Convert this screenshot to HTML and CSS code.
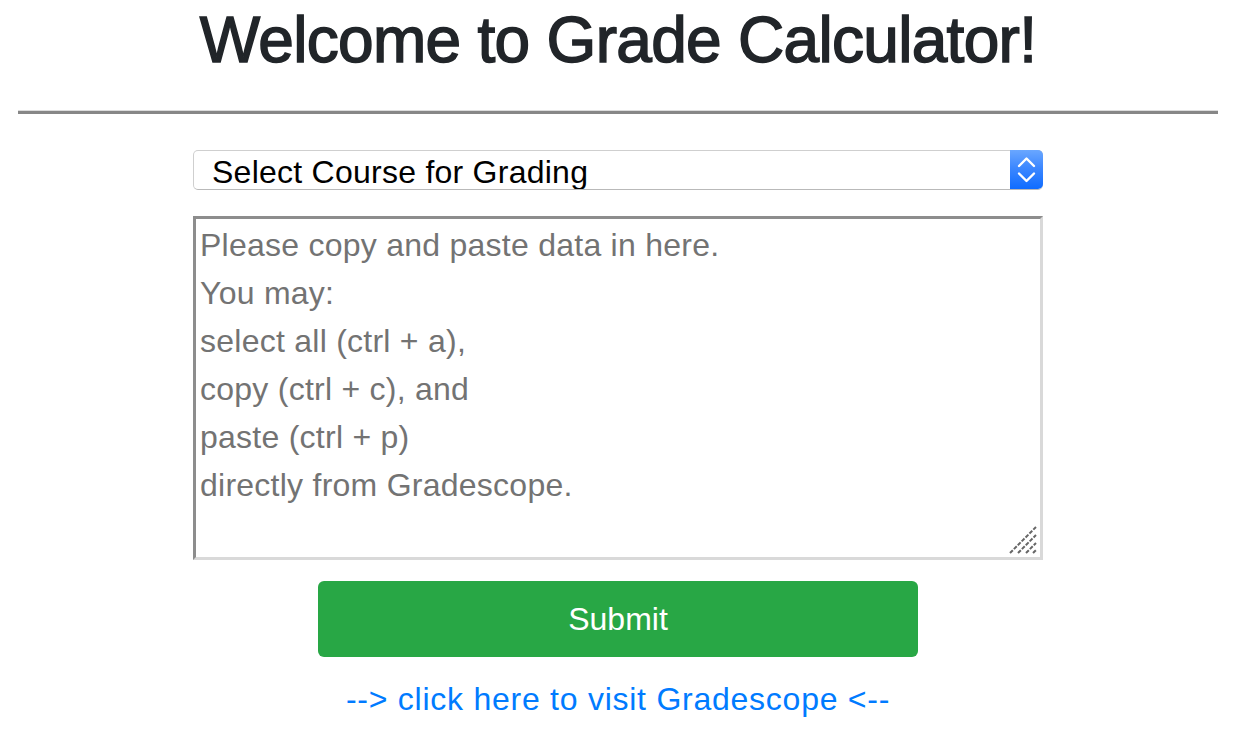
FILE: index.html
```html
<!DOCTYPE html>
<html lang="en">
<head>
<meta charset="utf-8">
<title>Grade Calculator</title>
<link rel="stylesheet" href="styles.css">
</head>
<body>
<div class="page">
  <h1 class="title">Welcome to Grade Calculator!</h1>
  <div class="rule"></div>
  <form class="form">
    <div class="select-wrap">
      <select class="course">
        <option>Select Course for Grading</option>
      </select>
      <span class="stepper">
        <svg width="33" height="39" viewBox="0 0 33 39">
          <polyline points="9,16 16.5,8.5 24,16" fill="none" stroke="#fff" stroke-width="2.4" stroke-linecap="round" stroke-linejoin="round"/>
          <polyline points="9,23.5 16.5,31 24,23.5" fill="none" stroke="#fff" stroke-width="2.4" stroke-linecap="round" stroke-linejoin="round"/>
        </svg>
      </span>
    </div>
    <div class="ta-wrap">
      <textarea class="data" placeholder="Please copy and paste data in here.&#10;You may:&#10;select all (ctrl + a),&#10;copy (ctrl + c), and&#10;paste (ctrl + p)&#10;directly from Gradescope."></textarea>
      <svg class="grip" width="28" height="28" viewBox="0 0 28 28">
        <g stroke="#666" stroke-width="2" stroke-dasharray="4 1.5">
          <line x1="1" y1="27" x2="27" y2="1"/>
          <line x1="9" y1="27" x2="27" y2="9"/>
          <line x1="17" y1="27" x2="27" y2="17"/>
          <line x1="24" y1="27" x2="27" y2="24"/>
        </g>
      </svg>
    </div>
    <button type="button" class="submit">Submit</button>
  </form>
  <a class="visit" href="#">--&gt; click here to visit Gradescope &lt;--</a>
</div>
</body>
</html>
```

FILE: styles.css
```css
html, body {
  margin: 0;
  padding: 0;
  background: #fff;
}

body {
  font-family: "Liberation Sans", Arial, Helvetica, sans-serif;
  color: #212529;
}

.page {
  padding: 0 20px 0 18px;
  display: flex;
  flex-direction: column;
  align-items: center;
}

.title {
  margin: 0;
  padding-top: 2px;
  font-size: 64px;
  line-height: 77px;
  font-weight: 400;
  letter-spacing: -0.7px;
  color: #212529;
  -webkit-text-stroke: 1.5px #212529;
  text-align: center;
}

.rule {
  align-self: stretch;
  margin-top: 31px;
  height: 3px;
  border-top: 1px solid #dcdcdc;
  background: #878787;
}

.form {
  display: flex;
  flex-direction: column;
  align-items: center;
  margin-top: 36px;
}

.select-wrap {
  position: relative;
  width: 850px;
  height: 40px;
}

.course {
  -webkit-appearance: none;
  appearance: none;
  width: 100%;
  height: 40px;
  margin: 0;
  padding: 3px 40px 0 18px;
  box-sizing: border-box;
  border: 1px solid #cfcfcf;
  border-bottom-color: #b9b9b9;
  border-radius: 5px;
  background: #fff;
  font-family: "Liberation Sans", Arial, Helvetica, sans-serif;
  font-size: 32px;
  letter-spacing: 0.25px;
  color: #000;
  outline: none;
}

.stepper {
  position: absolute;
  top: 0;
  right: 0;
  width: 33px;
  height: 39px;
  border-radius: 0 5px 5px 0;
  background: linear-gradient(to bottom, #6aa7ff 0%, #3d88ff 45%, #0f6cff 100%);
  display: flex;
}

.ta-wrap {
  position: relative;
  width: 850px;
  margin-top: 26px;
}

.data {
  display: block;
  width: 850px;
  height: 344px;
  box-sizing: border-box;
  margin: 0;
  padding: 2px 4px;
  border-style: solid;
  border-width: 3px;
  border-color: #8d8d8d #d9d9d9 #d9d9d9 #8d8d8d;
  resize: none;
  font-family: "Liberation Sans", Arial, Helvetica, sans-serif;
  font-size: 32px;
  line-height: 48px;
  letter-spacing: 0.25px;
  color: #333;
  outline: none;
  background: #fff;
}

.data::placeholder {
  color: #737373;
  opacity: 1;
}

.grip {
  position: absolute;
  right: 6px;
  bottom: 6px;
}

.submit {
  margin-top: 21px;
  width: 600px;
  height: 76px;
  border: 0;
  border-radius: 6px;
  background: #28a745;
  color: #fff;
  font-family: "Liberation Sans", Arial, Helvetica, sans-serif;
  font-size: 32px;
  line-height: 48px;
  cursor: pointer;
}

.visit {
  margin-top: 18px;
  font-size: 32px;
  line-height: 48px;
  color: #007bff;
  text-decoration: none;
  letter-spacing: 0.75px;
}
```
